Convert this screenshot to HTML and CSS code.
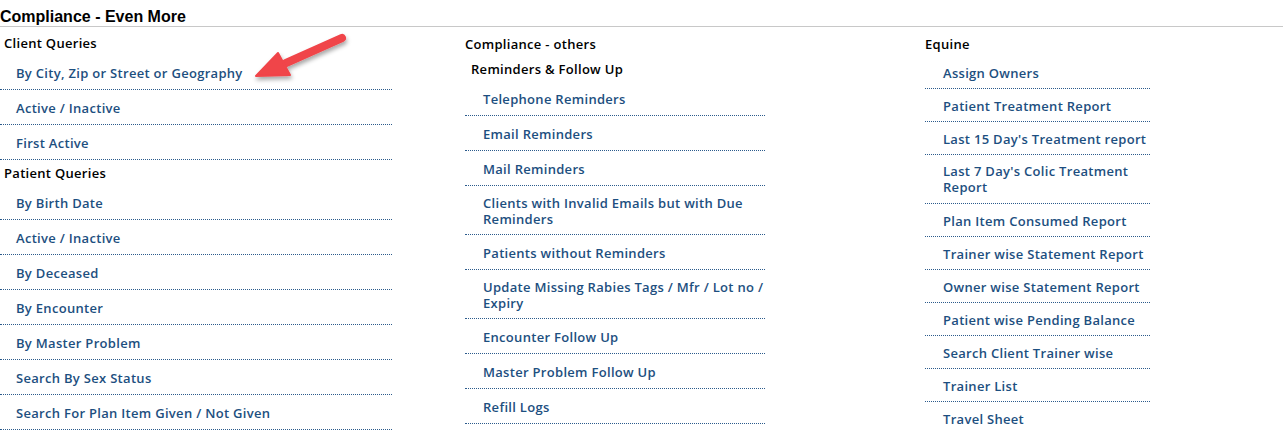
FILE: index.html
```html
<!DOCTYPE html>
<html>
<head>
<meta charset="utf-8">
<link rel="stylesheet" href="styles.css">
</head>
<body>
<div class="page">
  <h1 class="title">Compliance - Even More</h1>
  <div class="cols">
    <div class="col col1">
      <div class="grp">Client Queries</div>
      <ul class="list">
        <li><a>By City, Zip or Street or Geography</a></li>
        <li><a>Active / Inactive</a></li>
        <li><a>First Active</a></li>
      </ul>
      <div class="grp">Patient Queries</div>
      <ul class="list">
        <li><a>By Birth Date</a></li>
        <li><a>Active / Inactive</a></li>
        <li><a>By Deceased</a></li>
        <li><a>By Encounter</a></li>
        <li><a>By Master Problem</a></li>
        <li><a>Search By Sex Status</a></li>
        <li><a>Search For Plan Item Given / Not Given</a></li>
      </ul>
    </div>
    <div class="col col2">
      <div class="grp top">Compliance - others</div>
      <div class="grp sub">Reminders &amp; Follow Up</div>
      <ul class="list">
        <li><a>Telephone Reminders</a></li>
        <li><a>Email Reminders</a></li>
        <li><a>Mail Reminders</a></li>
        <li class="two"><a>Clients with Invalid Emails but with Due Reminders</a></li>
        <li><a>Patients without Reminders</a></li>
        <li class="two"><a>Update Missing Rabies Tags / Mfr / Lot no / Expiry</a></li>
        <li><a>Encounter Follow Up</a></li>
        <li><a>Master Problem Follow Up</a></li>
        <li><a>Refill Logs</a></li>
      </ul>
    </div>
    <div class="col col3">
      <div class="grp top">Equine</div>
      <ul class="list">
        <li><a>Assign Owners</a></li>
        <li><a>Patient Treatment Report</a></li>
        <li><a>Last 15 Day's Treatment report</a></li>
        <li class="two"><a>Last 7 Day's Colic Treatment Report</a></li>
        <li><a>Plan Item Consumed Report</a></li>
        <li><a>Trainer wise Statement Report</a></li>
        <li><a>Owner wise Statement Report</a></li>
        <li><a>Patient wise Pending Balance</a></li>
        <li><a>Search Client Trainer wise</a></li>
        <li><a>Trainer List</a></li>
        <li class="last"><a>Travel Sheet</a></li>
      </ul>
    </div>
  </div>
  <svg class="arrow" width="110" height="60" viewBox="0 0 110 60">
    <defs>
      <filter id="sh" x="-20%" y="-20%" width="140%" height="160%">
        <feDropShadow dx="1" dy="3" stdDeviation="2" flood-color="#000" flood-opacity="0.35"/>
      </filter>
    </defs>
    <g filter="url(#sh)" fill="#f04449" stroke="#f04449" stroke-linejoin="round">
      <line x1="98" y1="10" x2="42" y2="35" stroke-width="8" stroke-linecap="round"/>
      <polygon points="12,48 34,25 46,47" stroke-width="2"/>
    </g>
  </svg>
</div>
</body>
</html>
```
FILE: styles.css
```css
html, body { margin: 0; padding: 0; background: #fff; }
.page { position: relative; width: 1283px; height: 446px; overflow: hidden; }
.title {
  margin: 0;
  padding: 7px 0 0 0;
  height: 19px;
  font-family: "Liberation Sans", Arial, sans-serif;
  font-weight: bold;
  font-size: 16px;
  line-height: 19px;
  color: #000;
  border-bottom: 1px solid #c8c8c8;
}
.cols {
  display: grid;
  grid-template-columns: 465px 460px 1fr;
  font-family: "Open Sans", sans-serif;
  font-weight: 600;
  font-size: 13px;
  letter-spacing: 0.3px;
}
.grp { color: #000; line-height: 16px; }
.col1 .grp { padding-left: 4px; }
.col1 .grp:first-child { padding-top: 8px; height: 16px; }
.col1 .grp:not(:first-child) { padding-top: 5px; }
.top { padding-top: 9px; }
.sub { padding: 9px 0 0 6px; }
.list { list-style: none; margin: 0; padding: 0; }
.col1 .list { width: 392px; }
.col2 .list { width: 300px; }
.col3 .list { width: 225px; }
.list li {
  border-bottom: 1px dotted #2c5b8c;
  line-height: 18px;
}
.col1 .list li { padding: 9px 0 7px 16px; }
.col1 .list li:first-child { padding-top: 13px; }
.col2 .list li { padding: 9px 0 7px 18px; }
.col2 .list li:first-child { padding-top: 13px; }
.col2 .list li.two { line-height: 16px; padding-top: 9px; padding-bottom: 7px; }
.col3 .list li { padding: 8px 0 6px 18px; }
.col3 .list li:first-child { padding-top: 12px; }
.col3 .list li.two { line-height: 16px; padding-top: 8px; padding-bottom: 8px; }
.list li.last { border-bottom: none; }
.list a { color: #1d4f80; text-decoration: none; }
.arrow { position: absolute; left: 244px; top: 28px; }
```
